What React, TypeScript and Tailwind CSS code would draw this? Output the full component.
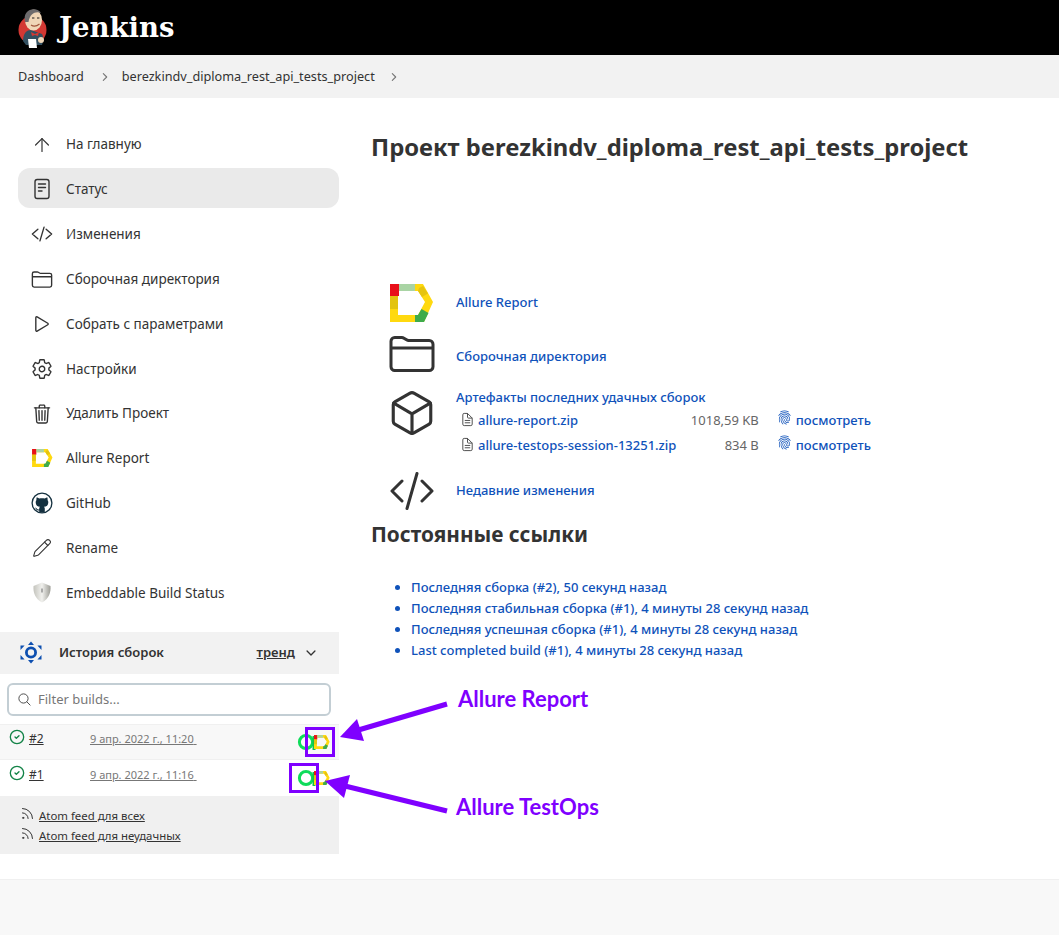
import type { ReactNode } from "react";
import {
  IoChevronDownOutline,
  IoChevronForwardOutline,
  IoCodeSlashOutline,
  IoCubeOutline,
  IoDocumentTextOutline,
  IoFingerPrintOutline,
  IoFolderOutline,
  IoPlayOutline,
  IoSearchOutline,
  IoSettingsOutline,
  IoTrashOutline,
} from "react-icons/io5";
import { ArrowUp, CircleCheck, Pencil, Rss } from "lucide-react";

const AllureLogo = ({ className }: { className: string }) => (
  <svg className={className} viewBox="0 0 44 38" fill="none">
    <path fillRule="evenodd" d="M0 0H33L43 18L34 38H0ZM8 7V31H28L35 18L28 7Z" fill="#ffd90f" />
    <rect x="0" y="0" width="9" height="12" fill="#e8101a" />
    <rect x="9" y="0" width="16" height="7" fill="#a9d4a4" />
    <rect x="0" y="12" width="8" height="13" fill="#e3c40f" />
    <path d="M33 2L38 9.5L32 13L28 7L29 4Z" fill="#e6c40f" />
    <path d="M31.5 25L38.5 29L34 38H25V31H28Z" fill="#3eab4b" />
  </svg>
);

const TestOpsLogo = ({ className }: { className: string }) => (
  <svg className={className} viewBox="0 0 20 18" fill="none">
    <circle cx="9" cy="9" r="6.6" stroke="#0fdc5a" strokeWidth="3" />
    <path d="M17 3V17" stroke="#12c04f" strokeWidth="3" />
  </svg>
);

const JenkinsLogo = () => (
  <svg className="h-[40px] w-[30px]" viewBox="0 0 30 40">
    <circle cx="14.5" cy="22" r="14" fill="#d33833" />
    <path d="M5 33C5 25 9 22 13 22L24 26C26 30 25 34 24 37H8Z" fill="#335061" />
    <ellipse cx="15.5" cy="12" rx="8.5" ry="10.5" fill="#f0d6b7" />
    <path d="M7 14C5 5 11 0.5 18 1.5C20 2 22 3 23 5C18 3 12 5 10.5 14Z" fill="#6d6b6d" />
    <path d="M14 10h2.4M19 10h2.4" stroke="#231f20" strokeWidth="1.2" />
    <path d="M13 17C16 19 19 18 21.5 16" stroke="#a0563b" strokeWidth="1.2" fill="none" />
    <path d="M13 24L17 26L21 24L20 28L17 27L14 28Z" fill="#d33833" />
    <path d="M10 31H18L19 40H11Z" fill="#fff" />
    <circle cx="23" cy="32" r="3" fill="#f0d6b7" />
  </svg>
);

const GithubIcon = () => (
  <svg className="h-[22px] w-[22px]" viewBox="0 0 22 22">
    <circle cx="11" cy="11" r="9.9" fill="#fff" stroke="#14303f" strokeWidth="1.3" />
    <path
      d="M5.8 5.2L8.3 6.5C9.9 6 12.1 6 13.7 6.5L16.2 5.2C16.7 6.4 16.7 7.4 16.5 8.1C17.1 8.8 17.3 9.6 17.3 10.4C17.3 13.2 15.5 14.5 13 14.8C13.6 15.3 13.8 16 13.8 16.8V20.6H8.2V18.4C6.6 18.7 5.5 18.2 4.9 16.8C4.6 16.2 4.2 15.9 3.8 15.7C5 15.5 5.7 16.3 6.2 17C6.7 17.5 7.4 17.5 8.2 17.2C8.2 16 8.4 15.3 9 14.8C6.5 14.5 4.7 13.2 4.7 10.4C4.7 9.6 4.9 8.8 5.5 8.1C5.3 7.4 5.3 6.4 5.8 5.2Z"
      fill="#14303f"
    />
  </svg>
);

const ShieldIcon = () => (
  <svg className="h-[23px] w-[23px]" viewBox="0 0 22 22">
    <defs>
      <linearGradient id="shield" x1="0" x2="1" y1="0" y2="0">
        <stop offset="0" stopColor="#c4c4bd" />
        <stop offset="0.5" stopColor="#f1f1ee" />
        <stop offset="1" stopColor="#9c9c95" />
      </linearGradient>
    </defs>
    <path d="M11 1L19.5 4.5C20 11 18 17 11 21C4 17 2 11 2.5 4.5Z" fill="url(#shield)" />
    <rect x="10.2" y="7" width="1.6" height="4" fill="#999" />
  </svg>
);

const BuildHistoryIcon = () => (
  <svg className="h-[23px] w-[22px]" viewBox="0 0 22 23" fill="#0d4fb0">
    <circle cx="11" cy="11.5" r="4.6" fill="none" stroke="#0d4fb0" strokeWidth="2.8" />
    <path d="M11 0.5L14 4H8Z" />
    <path d="M11 22.5L14 19H8Z" />
    <path d="M0.5 4.5H4.6L0.5 9Z" />
    <path d="M21.5 4.5H17.4L21.5 9Z" />
    <path d="M0.5 18.5H4.6L0.5 14Z" />
    <path d="M21.5 18.5H17.4L21.5 14Z" />
  </svg>
);

const StatusIcon = () => (
  <svg className="h-[22px] w-[22px]" viewBox="0 0 22 22" fill="none" stroke="#333" strokeWidth="1.4" strokeLinecap="round">
    <rect x="4" y="1.5" width="14" height="19" rx="2.2" />
    <path d="M7.5 6H14.5M7.5 9.5H14.5M7.5 13H11" />
  </svg>
);

const CodeLargeIcon = () => (
  <svg className="h-[38px] w-[44px]" viewBox="0 0 44 38" fill="none" stroke="#333" strokeWidth="3" strokeLinecap="round" strokeLinejoin="round">
    <path d="M12 9L2 19L12 29M32 9L42 19L32 29M27 1.5L17 36.5" />
  </svg>
);

const sideItems: { label: string; icon: ReactNode; active?: boolean }[] = [
  { label: "На главную", icon: <ArrowUp className="h-[22px] w-[22px]" strokeWidth={1.3} /> },
  { label: "Статус", icon: <StatusIcon />, active: true },
  { label: "Изменения", icon: <IoCodeSlashOutline className="h-[22px] w-[22px]" /> },
  { label: "Сборочная директория", icon: <IoFolderOutline className="h-[23px] w-[23px]" /> },
  { label: "Собрать с параметрами", icon: <IoPlayOutline className="h-[22px] w-[22px]" /> },
  { label: "Настройки", icon: <IoSettingsOutline className="h-[22px] w-[22px]" /> },
  { label: "Удалить Проект", icon: <IoTrashOutline className="h-[22px] w-[22px]" /> },
  { label: "Allure Report", icon: <AllureLogo className="h-[18px] w-[21px]" /> },
  { label: "GitHub", icon: <GithubIcon /> },
  { label: "Rename", icon: <Pencil className="h-[20px] w-[20px]" strokeWidth={1.3} /> },
  { label: "Embeddable Build Status", icon: <ShieldIcon /> },
];

const builds = [
  { id: "#2", date: "9 апр. 2022 г., 11:20", bg: "bg-[#f8f8f8] border-y border-[#f0f0f0]" },
  { id: "#1", date: "9 апр. 2022 г., 11:16", bg: "bg-white border-y border-transparent" },
];

const permalinks = [
  "Последняя сборка (#2), 50 секунд назад",
  "Последняя стабильная сборка (#1), 4 минуты 28 секунд назад",
  "Последняя успешная сборка (#1), 4 минуты 28 секунд назад",
  "Last completed build (#1), 4 минуты 28 секунд назад",
];

const artifacts = [
  { name: "allure-report.zip", size: "1018,59 KB" },
  { name: "allure-testops-session-13251.zip", size: "834 B" },
];

export default function App() {
  return (
    <div className="relative flex min-h-[935px] flex-col bg-white font-['Noto_Sans','Open_Sans',sans-serif] text-[13px] text-[#333]">
      <header className="flex h-[55px] items-center gap-[11px] bg-black pl-[18px]">
        <JenkinsLogo />
        <span className="font-['DejaVu_Serif',serif] text-[27.5px] leading-none font-bold text-white">Jenkins</span>
      </header>

      <nav className="flex h-[43px] items-center bg-[#f2f2f2] pt-[1px] pl-[18px] text-[12.7px] text-[#333]">
        <span>Dashboard</span>
        <IoChevronForwardOutline className="mr-[11px] ml-[15px] h-[12px] w-[12px] text-[#777]" />
        <span>berezkindv_diploma_rest_api_tests_project</span>
        <IoChevronForwardOutline className="ml-[13px] h-[12px] w-[12px] text-[#777]" />
      </nav>

      <div className="flex flex-1">
        <aside className="w-[339px] shrink-0 pt-[25px]">
          <div className="ml-[18px] flex w-[321px] flex-col gap-[4.85px] text-[13.5px]">
            {sideItems.map((item) => (
              <div
                key={item.label}
                className={`flex h-[40px] items-center rounded-xl pt-[3px] pl-[13px] ${item.active ? "bg-[#eaeaea]" : ""}`}
              >
                <span className="flex w-[22px] justify-center text-[#333]">{item.icon}</span>
                <span className="ml-[13px]">{item.label}</span>
              </div>
            ))}
          </div>

          <div className="mt-[20.5px] flex h-[42px] items-center bg-[#f2f2f2] pl-[20px]">
            <BuildHistoryIcon />
            <span className="ml-[17px] font-semibold">История сборок</span>
            <span className="ml-auto font-semibold underline">тренд</span>
            <IoChevronDownOutline className="mr-[21px] ml-[9px] h-[14px] w-[14px]" />
          </div>

          <div className="pt-[9px] pr-[8px] pb-[8px] pl-[7px]">
            <div className="flex h-[33px] items-center rounded-md border-2 border-[#c3ced4] pl-[8px] text-[#777]">
              <IoSearchOutline className="h-[15px] w-[15px] text-[#444]" />
              <span className="ml-[6px]">Filter builds...</span>
            </div>
          </div>

          <div>
            {builds.map((build) => (
              <div key={build.id} className={`relative flex h-[36px] pl-[9px] ${build.bg}`}>
                <CircleCheck className="mt-[4px] h-[16px] w-[16px] text-[#138347]" strokeWidth={2} />
                <span className="mt-[5px] ml-[4px] w-[61px] text-[12px] underline">{build.id}</span>
                <span className="mt-[6px] text-[11px] text-[#777] underline">{build.date}&nbsp;</span>
                <div className="absolute top-[8px] left-[297px] flex">
                  <TestOpsLogo className="h-[18px] w-[20px]" />
                  <AllureLogo className="-ml-[3px] h-[14px] w-[16px] self-center" />
                </div>
              </div>
            ))}
          </div>

          <div className="flex h-[58px] flex-col justify-center gap-[3px] bg-[#f0f0f0] pt-[1px] pl-[20px] text-[11.4px] leading-[17px]">
            {["Atom feed для всех", "Atom feed для неудачных"].map((label) => (
              <div key={label} className="flex items-start">
                <Rss className="-mt-[1px] h-[15px] w-[15px]" strokeWidth={1.6} />
                <span className="ml-[4px] underline">{label}</span>
              </div>
            ))}
          </div>
        </aside>

        <main className="pt-[33px] pl-[33px] text-[#0f52ba]">
          <h1 className="-ml-[1px] text-[23.8px] leading-[32px] font-bold text-[#333]">
            Проект berezkindv_diploma_rest_api_tests_project
          </h1>

          <div className="mt-[113px] flex h-[54px] items-center">
            <span className="mr-[4px] flex w-[80px] justify-center">
              <AllureLogo className="h-[38px] w-[44px]" />
            </span>
            <span className="font-medium">Allure Report</span>
          </div>
          <div className="flex h-[54px] items-center">
            <span className="-mt-[6px] mr-[4px] flex w-[80px] justify-center text-[#333]">
              <IoFolderOutline className="h-[48px] w-[48px]" />
            </span>
            <span className="font-medium">Сборочная директория</span>
          </div>
          <div className="flex h-[80px] pt-[2px]">
            <span className="mr-[4px] flex w-[80px] justify-center pt-[2px] text-[#333]">
              <IoCubeOutline className="h-[50px] w-[50px]" />
            </span>
            <div className="font-medium">
              <div className="h-[22px] leading-[22px]">Артефакты последних удачных сборок</div>
              {artifacts.map((a) => (
                <div key={a.name} className="flex h-[25px] w-[415px] items-center pl-[4px]">
                  <IoDocumentTextOutline className="-mt-[3px] h-[15px] w-[15px] text-[#444]" />
                  <span className="ml-[3px]">{a.name}</span>
                  <span className="ml-auto font-normal text-[#666]">{a.size}</span>
                  <IoFingerPrintOutline className="-mt-[7px] ml-[18px] h-[15px] w-[15px]" />
                  <span className="ml-[4px]">посмотреть</span>
                </div>
              ))}
            </div>
          </div>
          <div className="flex h-[54px] items-center">
            <span className="mr-[4px] flex w-[80px] justify-center">
              <CodeLargeIcon />
            </span>
            <span className="font-medium">Недавние изменения</span>
          </div>

          <h2 className="mt-[2px] -ml-[1px] text-[20.8px] leading-[28px] font-bold text-[#333]">Постоянные ссылки</h2>
          <ul className="mt-[29px] list-disc pl-[39px] font-medium">
            {permalinks.map((link) => (
              <li key={link} className="h-[21px] leading-[21px]">
                {link}
              </li>
            ))}
          </ul>
        </main>
      </div>

      <footer className="h-[56px] border-t border-[#f0f0f0] bg-[#f8f8f8]" />

      {/* annotations drawn over the screenshot */}
      <svg className="pointer-events-none absolute top-0 left-0 h-[935px] w-[1059px]" viewBox="0 0 1059 935" fill="none">
        <rect x="306.5" y="728.5" width="27" height="27" stroke="#7f00ff" strokeWidth="3" />
        <rect x="290.5" y="764.5" width="27" height="27" stroke="#7f00ff" strokeWidth="3" />
        <path d="M447 704L355 731" stroke="#7f00ff" strokeWidth="5" />
        <path d="M340 737L357 719L364 741Z" fill="#7f00ff" />
        <path d="M447 811L345 786" stroke="#7f00ff" strokeWidth="5" />
        <path d="M325 781L350 775L344 798Z" fill="#7f00ff" />
      </svg>
      <span className="absolute top-[685px] left-[458px] font-['Lato',sans-serif] text-[22px] leading-[28px] font-bold text-[#7f00ff]">
        Allure Report
      </span>
      <span className="absolute top-[793px] left-[456px] font-['Lato',sans-serif] text-[22px] leading-[28px] font-bold text-[#7f00ff]">
        Allure TestOps
      </span>
    </div>
  );
}
